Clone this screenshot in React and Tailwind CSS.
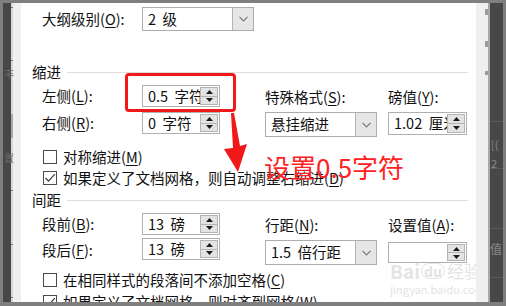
const FONT = "font-['Noto_Sans_CJK_SC','Noto_Sans',sans-serif]";
const TXT = "text-[14.5px] leading-none text-[#111] whitespace-nowrap";
const VAL = "text-[14.5px] leading-none text-[#111] whitespace-pre";

function Tri({ down }) {
  return (
    <svg width="7" height="4" viewBox="0 0 7 4">
      <path d={down ? "M0 0H7L3.5 4Z" : "M3.5 0L7 4H0Z"} fill="#1a1a1a" />
    </svg>
  );
}

function SpinBox({ value, w = "w-[78px]", h = "h-[22px]" }) {
  return (
    <div className={`flex ${w} ${h} border border-[#b0b0b0] bg-white p-[1px]`}>
      <div className={`flex-1 overflow-hidden pl-[4px] pt-[2px] ${VAL}`}>{value}</div>
      <div className="flex w-[18px] flex-col border border-[#b4b4b4] bg-[#e3e3e3]">
        <div className="flex flex-1 items-center justify-center border-b border-[#b4b4b4]">
          <Tri />
        </div>
        <div className="flex flex-1 items-center justify-center">
          <Tri down />
        </div>
      </div>
    </div>
  );
}

function Select({ value, h = "h-[24px]" }) {
  return (
    <div className={`flex w-[112px] ${h} border border-[#adadad] bg-white`}>
      <div className={`flex-1 overflow-hidden pl-[5px] pt-[4px] ${VAL}`}>{value}</div>
      <div className="flex w-[21px] items-center justify-center border-l border-[#b4b4b4] bg-[#e6e6e6]">
        <svg width="9" height="6" viewBox="0 0 9 6">
          <path d="M0.5 0.8L4.5 5L8.5 0.8" fill="none" stroke="#777" strokeWidth="1.1" />
        </svg>
      </div>
    </div>
  );
}

function Check({ checked, children }) {
  return (
    <div className="flex h-[18px] items-center pl-[22px]">
      <div className="flex h-[14px] w-[14px] items-center justify-center border border-[#4a4a4a] bg-white">
        {checked && (
          <svg width="12" height="10" viewBox="0 0 12 10">
            <path d="M1.5 5L4.5 8.2L10.8 1.2" fill="none" stroke="#3a3a3a" strokeWidth="1.2" />
          </svg>
        )}
      </div>
      <span className={`ml-[6px] ${TXT}`}>{children}</span>
    </div>
  );
}

function Heading({ children }) {
  return (
    <div className="flex h-[18px] items-center pl-[11px] pr-[8px]">
      <span className={TXT}>{children}</span>
      <div className="ml-[6px] h-px flex-1 bg-[#dedede]" />
    </div>
  );
}

const u = (ch) => <span className="underline underline-offset-2">{ch}</span>;

export default function App() {
  return (
    <div className={`h-[306px] w-[506px] overflow-hidden bg-[#7f7f7f] pt-[3px] pb-[4px] px-[3px] ${FONT}`}>
      <div className="flex h-full">
        {/* left editor strip */}
        <div className="relative w-[8px] bg-[#474747]">
          <span className="absolute left-[1px] top-[66px] text-[10px] leading-none text-[#6a6a6a]">丰</span>
          <span className="absolute left-[1px] top-[150px] text-[10px] leading-none text-[#6a6a6a]">置</span>
        </div>
        <div className="flex w-[2px] flex-col justify-between bg-[#d9d9d9] py-[4px]">
          <div className="h-px bg-[#777]" />
          <div className="h-px bg-[#777]" />
          <div className="h-[24px] bg-[#aaa]" />
          <div className="h-px bg-[#777]" />
          <div className="h-px bg-[#777]" />
          <div className="h-px bg-[#777]" />
        </div>
        <div className="w-[8px] bg-[#f0f0f0]" />

        {/* dialog body */}
        <div className="relative flex w-[455px] flex-col overflow-hidden bg-white pt-[4px]">
          <div className="flex items-center pl-[21px]">
            <span className={`w-[100px] ${TXT}`}>大纲级别({u("O")}):</span>
            <Select value="2  级" />
          </div>

          <div className="mt-[32px]">
            <Heading>缩进</Heading>
          </div>

          <div className="mt-[4px] grid grid-cols-[100px_123px_123px_80px] items-center pl-[21px]">
            <span className={TXT}>左侧({u("L")}):</span>
            <SpinBox value="0.5  字符" />
            <span className={`${TXT} pt-[2px]`}>特殊格式({u("S")}):</span>
            <span className={`${TXT} pt-[2px]`}>磅值({u("Y")}):</span>
          </div>

          <div className="mt-[5px] grid grid-cols-[100px_123px_123px_80px] items-start pl-[21px]">
            <span className={`${TXT} pt-[4px]`}>右侧({u("R")}):</span>
            <SpinBox value="0  字符" />
            <Select value="悬挂缩进" h="h-[25px]" />
            <SpinBox value="1.02  厘米" w="w-[79px]" h="h-[23px]" />
          </div>

          <div className="mt-[11px]">
            <Check>对称缩进({u("M")})</Check>
          </div>
          <div className="mt-[3px]">
            <Check checked>如果定义了文档网格，则自动调整右缩进({u("D")})</Check>
          </div>

          <div className="mt-[4px]">
            <Heading>间距</Heading>
          </div>

          <div className="mt-[4px] grid grid-cols-[100px_123px_123px_80px] items-center pl-[21px]">
            <span className={TXT}>段前({u("B")}):</span>
            <SpinBox value="13  磅" />
            <span className={`${TXT} pt-[2px]`}>行距({u("N")}):</span>
            <span className={`${TXT} pt-[2px]`}>设置值({u("A")}):</span>
          </div>

          <div className="mt-[3px] grid grid-cols-[100px_123px_123px_80px] items-start pl-[21px]">
            <span className={`${TXT} pt-[5px]`}>段后({u("F")}):</span>
            <SpinBox value="13  磅" />
            <div className="pt-[2px]">
              <Select value="1.5  倍行距" h="h-[25px]" />
            </div>
            <div className="pt-[4px]">
              <SpinBox value="" w="w-[79px]" h="h-[21px]" />
            </div>
          </div>

          <div className="mt-[6px]">
            <Check>在相同样式的段落间不添加空格({u("C")})</Check>
          </div>
          <div className="mt-[4px]">
            <Check checked>如果定义了文档网格，则对齐到网格({u("W")})</Check>
          </div>

          {/* annotation overlays */}
          <div className="absolute left-[104px] top-[70px] h-[39px] w-[111px] rounded-[4px] border-[3px] border-[#f01818]" />
          <svg className="absolute left-[200px] top-[105px]" width="30" height="68" viewBox="0 0 30 68">
            <path d="M10 5L13 5L19 38L26 36L17 64L3 41L12 40Z" fill="#f01818" />
          </svg>
          <span className="absolute left-[243px] top-[151px] whitespace-nowrap text-[26px] leading-none text-[#ff2222]">
            设置0.5字符
          </span>

          {/* watermark */}
          <div className="absolute left-[369px] top-[258px] flex flex-col items-start leading-none text-[#e4e4e4]">
            <div className="flex items-center">
              <span className="text-[19px] font-bold leading-none">Bai</span>
              <span className="ml-[1px] rounded-full border border-[#e4e4e4] px-[2px] text-[14px] font-bold leading-none">du</span>
              <span className="ml-[2px] text-[17px] leading-none">经验</span>
            </div>
            <span className="mt-[4px] text-[11px] leading-none">jingyan.baidu.com</span>
          </div>
        </div>

        {/* right editor strip */}
        <div className="flex w-[12px] flex-col gap-[10px] bg-[#efefef] pl-[9px] pt-[6px]">
          <div className="h-[6px] w-[3px] bg-[#9a9a9a]" />
          <div className="mt-[16px] h-[6px] w-[3px] bg-[#9a9a9a]" />
          <div className="mt-[14px] h-[4px] w-[3px] bg-[#9a9a9a]" />
        </div>
        <div className="w-[2px] bg-[#a8a8a8]" />
        <div className="relative flex-1 bg-[#474747]">
          <div className="absolute left-0 right-0 top-[118px] h-px bg-[#5a5a5a]" />
          <div className="absolute left-0 right-0 top-[165px] h-px bg-[#5a5a5a]" />
          <div className="absolute left-0 right-0 top-[225px] h-px bg-[#5a5a5a]" />
          <div className="absolute left-0 right-0 top-[274px] h-px bg-[#5a5a5a]" />
          <span className="absolute left-[1px] top-[136px] text-[11px] leading-none text-[#888]">[(</span>
          <span className="absolute left-[1px] top-[155px] text-[11px] leading-none text-[#888]">2</span>
          <span className="absolute left-[0px] top-[240px] text-[12px] leading-none text-[#888]">值</span>
        </div>
      </div>
    </div>
  );
}
